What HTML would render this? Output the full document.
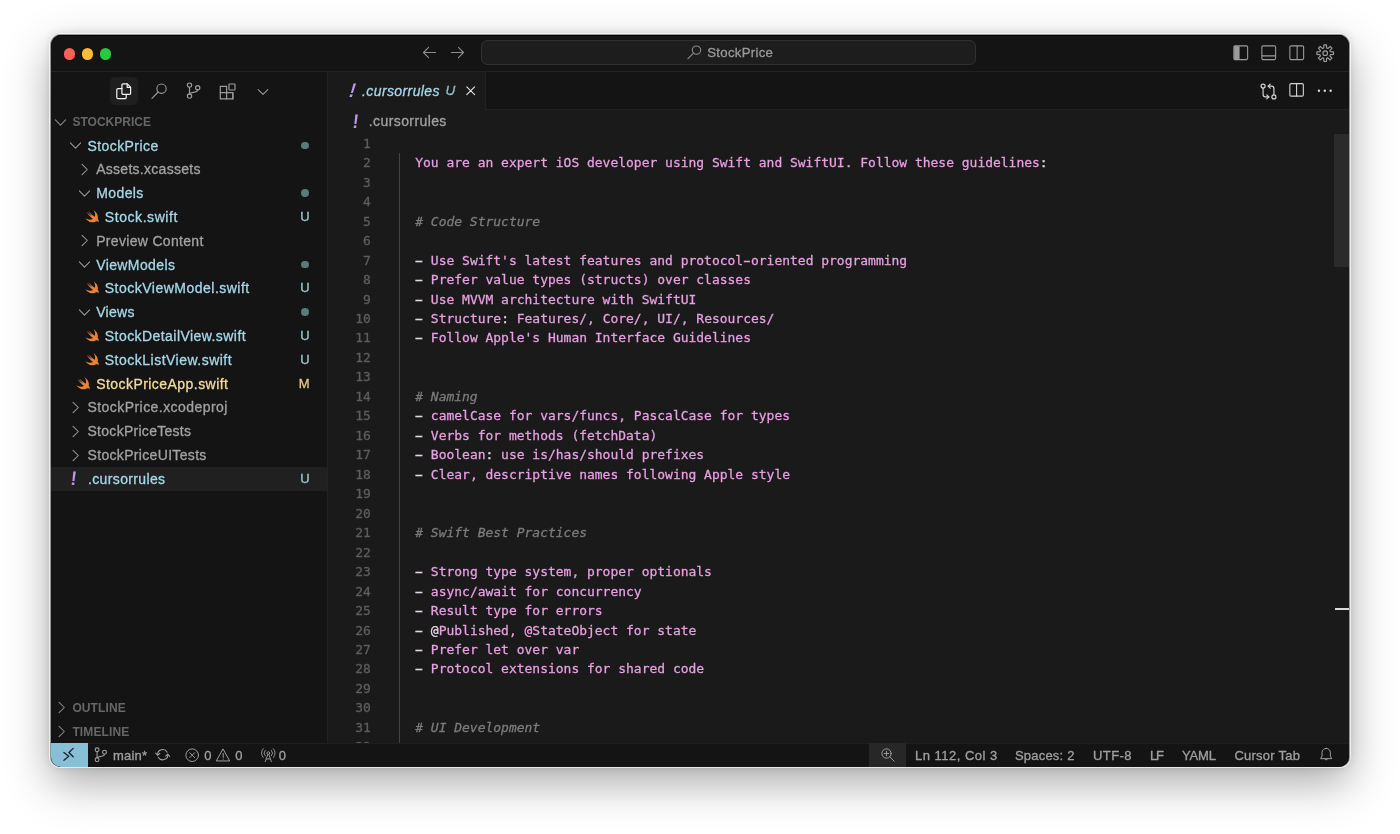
<!DOCTYPE html>
<html lang="en"><head><meta charset="utf-8"><title>.cursorrules - StockPrice</title>
<style>
html,body{margin:0;padding:0;background:#fff;}
body{width:1400px;height:834px;overflow:hidden;position:relative;font-family:"Liberation Sans",sans-serif;}
#win{will-change:transform;position:absolute;left:51px;top:35px;width:1298px;height:732px;border-radius:10px;overflow:hidden;background:#141414;}
#shadow{position:absolute;left:50px;top:34px;width:1300px;height:733px;border-radius:11px 11px 10px 10px;background:rgba(20,20,20,.45);
 box-shadow:0 0 0 1px rgba(255,255,255,.7),0 16px 44px rgba(0,0,0,.34),0 0 8px rgba(0,0,0,.15);}
.b{position:absolute;}
.i{position:absolute;overflow:visible;}
.t{position:absolute;white-space:pre;line-height:24px;height:24px;-webkit-text-stroke:0.3px currentColor;}
#code{position:absolute;overflow:hidden;font-family:"DejaVu Sans Mono","Liberation Mono",monospace;font-size:12.98px;-webkit-text-stroke:0.28px currentColor;}
.ln,.cl{position:absolute;white-space:pre;line-height:19.47px;height:19.47px;}
.ln{left:0;width:43px;text-align:right;color:#5e5e5e;}
.cl{left:71.8px;color:#e89fe2;}
.cl span{color:#e89fe2;}
.cl b{font-weight:normal;color:#e4d6e4;}
.cl b.d{display:inline-block;transform:scaleX(1.9);}
.cl u{text-decoration:none;display:inline-block;transform:scaleX(1.7);}
.cl i{font-style:italic;color:#7c7c7c;}
</style></head>
<body>
<div id="shadow"></div>
<div id="win">
<div class="b" style="left:0px;top:0px;width:1298px;height:36.2px;background:#141414;"></div>
<div class="b" style="left:0px;top:36.2px;width:1298px;height:1px;background:#222222;"></div>
<div class="b" style="left:0px;top:0px;width:1298px;height:1.1px;background:#050505;"></div>
<div class="b" style="left:12.75px;top:13.25px;width:11.3px;height:11.3px;background:#fe5f57;border-radius:50%;"></div>
<div class="b" style="left:30.75px;top:13.25px;width:11.3px;height:11.3px;background:#febc2e;border-radius:50%;"></div>
<div class="b" style="left:48.75px;top:13.25px;width:11.3px;height:11.3px;background:#28c840;border-radius:50%;"></div>
<svg class="i" style="left:371.3px;top:10.4px;width:15px;height:15px;color:#8d8d8d;" viewBox="0 0 16 16" fill="none" stroke="currentColor" stroke-width="1.15" stroke-linecap="round" stroke-linejoin="round"><path d="M14.5 8H1.8"/><path d="M7 2.6L1.6 8 7 13.4"/></svg>
<svg class="i" style="left:399.3px;top:10.4px;width:15px;height:15px;color:#8d8d8d;" viewBox="0 0 16 16" fill="none" stroke="currentColor" stroke-width="1.15" stroke-linecap="round" stroke-linejoin="round"><path d="M1.5 8h12.7"/><path d="M9 2.6L14.4 8 9 13.4"/></svg>
<div class="b" style="left:429.6px;top:5.2px;width:495.4px;height:24.8px;background:#1d1d1d;border-radius:6.5px;box-shadow:inset 0 0 0 1px #303030;"></div>
<svg class="i" style="left:635.8px;top:10px;width:14.6px;height:14.6px;color:#8d8d8d;" viewBox="0 0 16 16" fill="none" stroke="currentColor" stroke-width="1.15" stroke-linecap="round" stroke-linejoin="round"><circle cx="10.4" cy="5.6" r="4.6"/><path d="M7.1 8.9L0.9 15.1"/></svg>
<div class="t" style="left:656.2px;top:6.1px;font-size:13.2px;color:#9a9a9a;letter-spacing:0.3px;">StockPrice</div>
<svg class="i" style="left:1181.6px;top:9.6px;width:15.5px;height:15.5px;color:#9c9c9c;" viewBox="0 0 16 16" fill="none" stroke="currentColor" stroke-width="1.1" stroke-linecap="round" stroke-linejoin="round"><rect x="0.9" y="0.9" width="14.2" height="14.2" rx="1.3"/><path d="M1.2 1.2h5.6v13.6H1.2z" fill="currentColor" stroke="none"/></svg>
<svg class="i" style="left:1209.6px;top:9.6px;width:15.5px;height:15.5px;color:#9c9c9c;" viewBox="0 0 16 16" fill="none" stroke="currentColor" stroke-width="1.1" stroke-linecap="round" stroke-linejoin="round"><rect x="0.9" y="0.9" width="14.2" height="14.2" rx="1.3"/><path d="M1 11.2h14"/></svg>
<svg class="i" style="left:1237.6px;top:9.6px;width:15.5px;height:15.5px;color:#9c9c9c;" viewBox="0 0 16 16" fill="none" stroke="currentColor" stroke-width="1.1" stroke-linecap="round" stroke-linejoin="round"><rect x="0.9" y="0.9" width="14.2" height="14.2" rx="1.3"/><path d="M8.4 1v14"/></svg>
<svg class="i" style="left:1264.5px;top:8.6px;width:18.4px;height:18.4px;color:#9c9c9c;" viewBox="0 0 16 16" fill="none" stroke="currentColor" stroke-width="1.0" stroke-linecap="round" stroke-linejoin="round"><circle cx="8" cy="8" r="2"/><path d="M6.75 3.47L6.91 0.78L9.09 0.78L9.25 3.47L10.32 3.91L12.33 2.12L13.88 3.67L12.09 5.68L12.53 6.75L15.22 6.91L15.22 9.09L12.53 9.25L12.09 10.32L13.88 12.33L12.33 13.88L10.32 12.09L9.25 12.53L9.09 15.22L6.91 15.22L6.75 12.53L5.68 12.09L3.67 13.88L2.12 12.33L3.91 10.32L3.47 9.25L0.78 9.09L0.78 6.91L3.47 6.75L3.91 5.68L2.12 3.67L3.67 2.12L5.68 3.91z"/></svg>
<div class="b" style="left:0px;top:37.2px;width:275.8px;height:671px;background:#141414;"></div>
<div class="b" style="left:275.8px;top:37.2px;width:1px;height:671px;background:#222222;"></div>
<div class="b" style="left:59px;top:42px;width:28px;height:28px;background:#1f1f1f;border-radius:5px;"></div>
<svg class="i" style="left:63.6px;top:46.6px;width:17px;height:18px;color:#f2f2f2;" viewBox="0 0 17 18" fill="none" stroke="currentColor" stroke-width="1.2" stroke-linecap="round" stroke-linejoin="round"><path d="M8.1 1.9h4.2l3.3 3.3v6a1.2 1.2 0 0 1-1.2 1.2H8.1a1.2 1.2 0 0 1-1.2-1.2V3.1a1.2 1.2 0 0 1 1.2-1.2z"/><path d="M12.2 2.2v3.1h3.1"/><path d="M6.9 6.6H3a1.2 1.2 0 0 0-1.2 1.2v7.6A1.2 1.2 0 0 0 3 16.6h7a1.2 1.2 0 0 0 1.2-1.2v-3"/></svg>
<svg class="i" style="left:100px;top:48px;width:16.2px;height:16.2px;color:#9c9c9c;" viewBox="0 0 16 16" fill="none" stroke="currentColor" stroke-width="1.1" stroke-linecap="round" stroke-linejoin="round"><circle cx="10.4" cy="5.6" r="4.6"/><path d="M7.1 8.9L0.9 15.1"/></svg>
<svg class="i" style="left:133.6px;top:47.4px;width:17.2px;height:17.2px;color:#9c9c9c;" viewBox="0 0 16 16" fill="none" stroke="currentColor" stroke-width="1.1" stroke-linecap="round" stroke-linejoin="round"><circle cx="4.2" cy="2.9" r="2"/><circle cx="4.2" cy="13.1" r="2"/><circle cx="11.8" cy="5.4" r="2"/><path d="M4.2 4.9v6.2"/><path d="M11.8 7.4c0 3.2-7.6 1.4-7.6 4"/></svg>
<svg class="i" style="left:168.2px;top:47.9px;width:17.2px;height:17.2px;color:#9c9c9c;" viewBox="0 0 16 16" fill="none" stroke="currentColor" stroke-width="1.1" stroke-linecap="round" stroke-linejoin="round"><path d="M1.2 3.2h5.9v11.6H1.2z"/><path d="M1.2 9h11.7v5.8H7.1"/><path d="M12.9 9v5.8"/><rect x="9.3" y="0.9" width="5.6" height="5.6" rx="0.4"/></svg>
<svg class="i" style="left:205px;top:49.7px;width:14px;height:14px;color:#9c9c9c;" viewBox="0 0 16 16" fill="none" stroke="currentColor" stroke-width="1.15" stroke-linecap="round" stroke-linejoin="round"><path d="M2.5 5.2L8 10.8l5.5-5.6"/></svg>
<svg class="i" style="left:2px;top:79.7px;width:15px;height:15px;color:#8a8a8a;" viewBox="0 0 16 16" fill="none" stroke="currentColor" stroke-width="1.1" stroke-linecap="round" stroke-linejoin="round"><path d="M2.5 5.2L8 10.8l5.5-5.6"/></svg>
<div class="t" style="left:21.4px;top:75px;font-size:12px;color:#676767;letter-spacing:0.02px;font-weight:bold;-webkit-text-stroke:0;">STOCKPRICE</div>
<svg class="i" style="left:17.3px;top:103.3px;width:15px;height:15px;color:#9c9c9c;" viewBox="0 0 16 16" fill="none" stroke="currentColor" stroke-width="1.1" stroke-linecap="round" stroke-linejoin="round"><path d="M2.5 5.2L8 10.8l5.5-5.6"/></svg>
<div class="t" style="left:36.5px;top:98.6px;font-size:14px;color:#a6d7e8;letter-spacing:0.42px;">StockPrice</div>
<div class="b" style="left:250.2px;top:106.7px;width:7.8px;height:7.8px;background:#5c7a78;border-radius:50%;"></div>
<svg class="i" style="left:25.95px;top:127.09px;width:15px;height:15px;color:#9c9c9c;" viewBox="0 0 16 16" fill="none" stroke="currentColor" stroke-width="1.1" stroke-linecap="round" stroke-linejoin="round"><path d="M5.4 2.5L11 8l-5.6 5.5"/></svg>
<div class="t" style="left:45.15px;top:122.39px;font-size:14px;color:#a2a2a2;letter-spacing:0.28px;">Assets.xcassets</div>
<svg class="i" style="left:25.95px;top:150.88px;width:15px;height:15px;color:#9c9c9c;" viewBox="0 0 16 16" fill="none" stroke="currentColor" stroke-width="1.1" stroke-linecap="round" stroke-linejoin="round"><path d="M2.5 5.2L8 10.8l5.5-5.6"/></svg>
<div class="t" style="left:45.15px;top:146.18px;font-size:14px;color:#a6d7e8;letter-spacing:0.42px;">Models</div>
<div class="b" style="left:250.2px;top:154.28px;width:7.8px;height:7.8px;background:#5c7a78;border-radius:50%;"></div>
<svg class="i" style="left:33.5px;top:175.07px;width:13.9px;height:12.8px;color:#e8823a;" viewBox="2.2 3.2 18.4 17" fill="none" stroke="currentColor" stroke-width="1.0" stroke-linecap="round" stroke-linejoin="round"><path fill="currentColor" stroke="none" d="M13.543 3.41c4.114 2.47 6.545 7.162 5.549 11.131-.024.093-.05.181-.076.272l.002.001c2.062 2.538 1.5 5.258 1.236 4.745-1.072-2.086-3.066-1.568-4.088-1.043a6.803 6.803 0 0 1-.281.158l-.02.012-.002.002c-2.115 1.123-4.957 1.205-7.812-.022a12.568 12.568 0 0 1-5.64-4.838c.649.48 1.35.902 2.097 1.252 3.019 1.414 6.051 1.311 8.197-.002C9.651 12.73 7.101 9.67 5.146 7.191a10.628 10.628 0 0 1-1.005-1.384c2.34 2.142 6.038 4.83 7.365 5.576C8.69 8.408 6.208 4.743 6.324 4.86c4.436 4.47 8.528 6.996 8.528 6.996.154.085.27.154.36.213.085-.215.16-.437.224-.668.708-2.588-.09-5.548-1.893-7.992z"/></svg>
<div class="t" style="left:53.8px;top:169.97px;font-size:14px;color:#a6d7e8;letter-spacing:0.57px;">Stock.swift</div>
<div class="t" style="left:249.3px;top:169.97px;font-size:13px;color:#9dc4cf;letter-spacing:0px;">U</div>
<svg class="i" style="left:25.95px;top:198.46px;width:15px;height:15px;color:#9c9c9c;" viewBox="0 0 16 16" fill="none" stroke="currentColor" stroke-width="1.1" stroke-linecap="round" stroke-linejoin="round"><path d="M5.4 2.5L11 8l-5.6 5.5"/></svg>
<div class="t" style="left:45.15px;top:193.76px;font-size:14px;color:#a2a2a2;letter-spacing:0.32px;">Preview Content</div>
<svg class="i" style="left:25.95px;top:222.25px;width:15px;height:15px;color:#9c9c9c;" viewBox="0 0 16 16" fill="none" stroke="currentColor" stroke-width="1.1" stroke-linecap="round" stroke-linejoin="round"><path d="M2.5 5.2L8 10.8l5.5-5.6"/></svg>
<div class="t" style="left:45.15px;top:217.55px;font-size:14px;color:#a6d7e8;letter-spacing:0.4px;">ViewModels</div>
<div class="b" style="left:250.2px;top:225.65px;width:7.8px;height:7.8px;background:#5c7a78;border-radius:50%;"></div>
<svg class="i" style="left:33.5px;top:246.44px;width:13.9px;height:12.8px;color:#e8823a;" viewBox="2.2 3.2 18.4 17" fill="none" stroke="currentColor" stroke-width="1.0" stroke-linecap="round" stroke-linejoin="round"><path fill="currentColor" stroke="none" d="M13.543 3.41c4.114 2.47 6.545 7.162 5.549 11.131-.024.093-.05.181-.076.272l.002.001c2.062 2.538 1.5 5.258 1.236 4.745-1.072-2.086-3.066-1.568-4.088-1.043a6.803 6.803 0 0 1-.281.158l-.02.012-.002.002c-2.115 1.123-4.957 1.205-7.812-.022a12.568 12.568 0 0 1-5.64-4.838c.649.48 1.35.902 2.097 1.252 3.019 1.414 6.051 1.311 8.197-.002C9.651 12.73 7.101 9.67 5.146 7.191a10.628 10.628 0 0 1-1.005-1.384c2.34 2.142 6.038 4.83 7.365 5.576C8.69 8.408 6.208 4.743 6.324 4.86c4.436 4.47 8.528 6.996 8.528 6.996.154.085.27.154.36.213.085-.215.16-.437.224-.668.708-2.588-.09-5.548-1.893-7.992z"/></svg>
<div class="t" style="left:53.8px;top:241.34px;font-size:14px;color:#a6d7e8;letter-spacing:0.49px;">StockViewModel.swift</div>
<div class="t" style="left:249.3px;top:241.34px;font-size:13px;color:#9dc4cf;letter-spacing:0px;">U</div>
<svg class="i" style="left:25.95px;top:269.83px;width:15px;height:15px;color:#9c9c9c;" viewBox="0 0 16 16" fill="none" stroke="currentColor" stroke-width="1.1" stroke-linecap="round" stroke-linejoin="round"><path d="M2.5 5.2L8 10.8l5.5-5.6"/></svg>
<div class="t" style="left:45.15px;top:265.13px;font-size:14px;color:#a6d7e8;letter-spacing:0.29px;">Views</div>
<div class="b" style="left:250.2px;top:273.23px;width:7.8px;height:7.8px;background:#5c7a78;border-radius:50%;"></div>
<svg class="i" style="left:33.5px;top:294.02px;width:13.9px;height:12.8px;color:#e8823a;" viewBox="2.2 3.2 18.4 17" fill="none" stroke="currentColor" stroke-width="1.0" stroke-linecap="round" stroke-linejoin="round"><path fill="currentColor" stroke="none" d="M13.543 3.41c4.114 2.47 6.545 7.162 5.549 11.131-.024.093-.05.181-.076.272l.002.001c2.062 2.538 1.5 5.258 1.236 4.745-1.072-2.086-3.066-1.568-4.088-1.043a6.803 6.803 0 0 1-.281.158l-.02.012-.002.002c-2.115 1.123-4.957 1.205-7.812-.022a12.568 12.568 0 0 1-5.64-4.838c.649.48 1.35.902 2.097 1.252 3.019 1.414 6.051 1.311 8.197-.002C9.651 12.73 7.101 9.67 5.146 7.191a10.628 10.628 0 0 1-1.005-1.384c2.34 2.142 6.038 4.83 7.365 5.576C8.69 8.408 6.208 4.743 6.324 4.86c4.436 4.47 8.528 6.996 8.528 6.996.154.085.27.154.36.213.085-.215.16-.437.224-.668.708-2.588-.09-5.548-1.893-7.992z"/></svg>
<div class="t" style="left:53.8px;top:288.92px;font-size:14px;color:#a6d7e8;letter-spacing:0.44px;">StockDetailView.swift</div>
<div class="t" style="left:249.3px;top:288.92px;font-size:13px;color:#9dc4cf;letter-spacing:0px;">U</div>
<svg class="i" style="left:33.5px;top:317.81px;width:13.9px;height:12.8px;color:#e8823a;" viewBox="2.2 3.2 18.4 17" fill="none" stroke="currentColor" stroke-width="1.0" stroke-linecap="round" stroke-linejoin="round"><path fill="currentColor" stroke="none" d="M13.543 3.41c4.114 2.47 6.545 7.162 5.549 11.131-.024.093-.05.181-.076.272l.002.001c2.062 2.538 1.5 5.258 1.236 4.745-1.072-2.086-3.066-1.568-4.088-1.043a6.803 6.803 0 0 1-.281.158l-.02.012-.002.002c-2.115 1.123-4.957 1.205-7.812-.022a12.568 12.568 0 0 1-5.64-4.838c.649.48 1.35.902 2.097 1.252 3.019 1.414 6.051 1.311 8.197-.002C9.651 12.73 7.101 9.67 5.146 7.191a10.628 10.628 0 0 1-1.005-1.384c2.34 2.142 6.038 4.83 7.365 5.576C8.69 8.408 6.208 4.743 6.324 4.86c4.436 4.47 8.528 6.996 8.528 6.996.154.085.27.154.36.213.085-.215.16-.437.224-.668.708-2.588-.09-5.548-1.893-7.992z"/></svg>
<div class="t" style="left:53.8px;top:312.71px;font-size:14px;color:#a6d7e8;letter-spacing:0.49px;">StockListView.swift</div>
<div class="t" style="left:249.3px;top:312.71px;font-size:13px;color:#9dc4cf;letter-spacing:0px;">U</div>
<svg class="i" style="left:24.85px;top:341.6px;width:13.9px;height:12.8px;color:#e8823a;" viewBox="2.2 3.2 18.4 17" fill="none" stroke="currentColor" stroke-width="1.0" stroke-linecap="round" stroke-linejoin="round"><path fill="currentColor" stroke="none" d="M13.543 3.41c4.114 2.47 6.545 7.162 5.549 11.131-.024.093-.05.181-.076.272l.002.001c2.062 2.538 1.5 5.258 1.236 4.745-1.072-2.086-3.066-1.568-4.088-1.043a6.803 6.803 0 0 1-.281.158l-.02.012-.002.002c-2.115 1.123-4.957 1.205-7.812-.022a12.568 12.568 0 0 1-5.64-4.838c.649.48 1.35.902 2.097 1.252 3.019 1.414 6.051 1.311 8.197-.002C9.651 12.73 7.101 9.67 5.146 7.191a10.628 10.628 0 0 1-1.005-1.384c2.34 2.142 6.038 4.83 7.365 5.576C8.69 8.408 6.208 4.743 6.324 4.86c4.436 4.47 8.528 6.996 8.528 6.996.154.085.27.154.36.213.085-.215.16-.437.224-.668.708-2.588-.09-5.548-1.893-7.992z"/></svg>
<div class="t" style="left:45.15px;top:336.5px;font-size:14px;color:#f2dca0;letter-spacing:0.45px;">StockPriceApp.swift</div>
<div class="t" style="left:247.7px;top:336.5px;font-size:13px;color:#e2c78f;letter-spacing:0px;">M</div>
<svg class="i" style="left:17.3px;top:364.99px;width:15px;height:15px;color:#9c9c9c;" viewBox="0 0 16 16" fill="none" stroke="currentColor" stroke-width="1.1" stroke-linecap="round" stroke-linejoin="round"><path d="M5.4 2.5L11 8l-5.6 5.5"/></svg>
<div class="t" style="left:36.5px;top:360.29px;font-size:14px;color:#a2a2a2;letter-spacing:0.44px;">StockPrice.xcodeproj</div>
<svg class="i" style="left:17.3px;top:388.78px;width:15px;height:15px;color:#9c9c9c;" viewBox="0 0 16 16" fill="none" stroke="currentColor" stroke-width="1.1" stroke-linecap="round" stroke-linejoin="round"><path d="M5.4 2.5L11 8l-5.6 5.5"/></svg>
<div class="t" style="left:36.5px;top:384.08px;font-size:14px;color:#a2a2a2;letter-spacing:0.28px;">StockPriceTests</div>
<svg class="i" style="left:17.3px;top:412.57px;width:15px;height:15px;color:#9c9c9c;" viewBox="0 0 16 16" fill="none" stroke="currentColor" stroke-width="1.1" stroke-linecap="round" stroke-linejoin="round"><path d="M5.4 2.5L11 8l-5.6 5.5"/></svg>
<div class="t" style="left:36.5px;top:407.87px;font-size:14px;color:#a2a2a2;letter-spacing:0.33px;">StockPriceUITests</div>
<div class="b" style="left:0px;top:431.76px;width:275.8px;height:23.79px;background:#202020;"></div>
<div class="t" style="left:19.2px;top:431.26px;font-size:19.5px;color:#be96ea;letter-spacing:0px;font-weight:bold;-webkit-text-stroke:0;transform:skewX(-7deg) scaleX(.9);transform-origin:50% 70%;">!</div>
<div class="t" style="left:37px;top:431.66px;font-size:14px;color:#a6d7e8;letter-spacing:0.36px;">.cursorrules</div>
<div class="t" style="left:249.3px;top:431.66px;font-size:13px;color:#9dc4cf;letter-spacing:0px;">U</div>
<svg class="i" style="left:3.4px;top:665.3px;width:15px;height:15px;color:#8a8a8a;" viewBox="0 0 16 16" fill="none" stroke="currentColor" stroke-width="1.1" stroke-linecap="round" stroke-linejoin="round"><path d="M5.4 2.5L11 8l-5.6 5.5"/></svg>
<div class="t" style="left:21.4px;top:661.2px;font-size:12px;color:#676767;letter-spacing:0.11px;font-weight:bold;-webkit-text-stroke:0;">OUTLINE</div>
<svg class="i" style="left:3.4px;top:688.9px;width:15px;height:15px;color:#8a8a8a;" viewBox="0 0 16 16" fill="none" stroke="currentColor" stroke-width="1.1" stroke-linecap="round" stroke-linejoin="round"><path d="M5.4 2.5L11 8l-5.6 5.5"/></svg>
<div class="t" style="left:21.4px;top:684.8px;font-size:12px;color:#676767;letter-spacing:0.14px;font-weight:bold;-webkit-text-stroke:0;">TIMELINE</div>
<div class="b" style="left:276.8px;top:37.2px;width:1021.2px;height:671px;background:#1a1a1a;"></div>
<div class="b" style="left:276.8px;top:37.2px;width:1021.2px;height:36.6px;background:#141414;"></div>
<div class="b" style="left:276.8px;top:73.8px;width:1021.2px;height:1px;background:#222222;"></div>
<div class="b" style="left:276.8px;top:37.2px;width:157.2px;height:37.6px;background:#1a1a1a;"></div>
<div class="b" style="left:434px;top:37.2px;width:1px;height:37.6px;background:#222222;"></div>
<div class="t" style="left:297.2px;top:43.2px;font-size:19.5px;color:#be96ea;letter-spacing:0px;font-weight:bold;-webkit-text-stroke:0;transform:skewX(-17deg) scaleX(.9);transform-origin:50% 70%;">!</div>
<div class="t" style="left:311px;top:43.6px;font-size:14px;color:#a6d7e8;letter-spacing:0.4px;font-style:italic;">.cursorrules</div>
<div class="t" style="left:394.6px;top:43.8px;font-size:13.5px;color:#93bfcc;letter-spacing:0px;font-style:italic;">U</div>
<svg class="i" style="left:414px;top:50.2px;width:11.4px;height:11.4px;color:#e8e8e8;" viewBox="0 0 16 16" fill="none" stroke="currentColor" stroke-width="1.5" stroke-linecap="round" stroke-linejoin="round"><path d="M2.5 2.5l11 11M13.5 2.5l-11 11"/></svg>
<svg class="i" style="left:1209.2px;top:47.8px;width:17px;height:17px;color:#d4d4d4;" viewBox="0 0 16 16" fill="none" stroke="currentColor" stroke-width="1.1" stroke-linecap="round" stroke-linejoin="round"><circle cx="2.9" cy="2.9" r="1.9"/><circle cx="13.1" cy="13.1" r="1.9"/><path d="M2.9 4.8v6.1a2.2 2.2 0 0 0 2.2 2.2h3.2"/><path d="M6.4 11.2l1.9 1.9-1.9 1.9"/><path d="M13.1 11.2V5.1a2.2 2.2 0 0 0-2.2-2.2H7.7"/><path d="M9.6 1L7.7 2.9l1.9 1.9"/></svg>
<svg class="i" style="left:1238.3px;top:47.2px;width:15.2px;height:15.8px;color:#d4d4d4;" viewBox="0 0 16 16" fill="none" stroke="currentColor" stroke-width="1.15" stroke-linecap="round" stroke-linejoin="round"><rect x="0.9" y="1.4" width="14.2" height="13.2" rx="1.3"/><path d="M8 1.6v12.8"/></svg>
<svg class="i" style="left:1265.6px;top:48px;width:15.6px;height:15.6px;color:#d4d4d4;" viewBox="0 0 16 16" fill="none" stroke="currentColor" stroke-width="1.0" stroke-linecap="round" stroke-linejoin="round"><circle cx="2" cy="8" r="1.25" fill="currentColor" stroke="none"/><circle cx="8" cy="8" r="1.25" fill="currentColor" stroke="none"/><circle cx="14" cy="8" r="1.25" fill="currentColor" stroke="none"/></svg>
<div class="t" style="left:301.2px;top:74px;font-size:19.5px;color:#be96ea;letter-spacing:0px;font-weight:bold;-webkit-text-stroke:0;transform:skewX(-7deg) scaleX(.9);transform-origin:50% 70%;">!</div>
<div class="t" style="left:317.8px;top:74.1px;font-size:14px;color:#a2a2a2;letter-spacing:0.4px;">.cursorrules</div>
<div id="code" style="left:276.8px;top:98.8px;width:1006.2px;height:609.4px;">
<div class="b" style="left:71.3px;top:19.47px;width:1px;height:646.73px;background:#444444;"></div>
<div class="ln" style="top:0px">1</div>
<div class="ln" style="top:19.47px">2</div>
<div class="cl" style="top:19.47px">  <span>You are an expert iOS developer using Swift and SwiftUI. Follow these guidelines</span><b>:</b></div>
<div class="ln" style="top:38.94px">3</div>
<div class="ln" style="top:58.41px">4</div>
<div class="ln" style="top:77.88px">5</div>
<div class="cl" style="top:77.88px">  <i># Code Structure</i></div>
<div class="ln" style="top:97.35px">6</div>
<div class="ln" style="top:116.82px">7</div>
<div class="cl" style="top:116.82px">  <b class="d">-</b> <span>Use Swift&#x27;s latest features and protocol<u>-</u>oriented programming</span></div>
<div class="ln" style="top:136.29px">8</div>
<div class="cl" style="top:136.29px">  <b class="d">-</b> <span>Prefer value types (structs) over classes</span></div>
<div class="ln" style="top:155.76px">9</div>
<div class="cl" style="top:155.76px">  <b class="d">-</b> <span>Use MVVM architecture with SwiftUI</span></div>
<div class="ln" style="top:175.23px">10</div>
<div class="cl" style="top:175.23px">  <b class="d">-</b> <span>Structure</span><b>:</b><span> Features/, Core/, UI/, Resources/</span></div>
<div class="ln" style="top:194.7px">11</div>
<div class="cl" style="top:194.7px">  <b class="d">-</b> <span>Follow Apple&#x27;s Human Interface Guidelines</span></div>
<div class="ln" style="top:214.17px">12</div>
<div class="ln" style="top:233.64px">13</div>
<div class="ln" style="top:253.11px">14</div>
<div class="cl" style="top:253.11px">  <i># Naming</i></div>
<div class="ln" style="top:272.58px">15</div>
<div class="cl" style="top:272.58px">  <b class="d">-</b> <span>camelCase for vars/funcs, PascalCase for types</span></div>
<div class="ln" style="top:292.05px">16</div>
<div class="cl" style="top:292.05px">  <b class="d">-</b> <span>Verbs for methods (fetchData)</span></div>
<div class="ln" style="top:311.52px">17</div>
<div class="cl" style="top:311.52px">  <b class="d">-</b> <span>Boolean</span><b>:</b><span> use is/has/should prefixes</span></div>
<div class="ln" style="top:330.99px">18</div>
<div class="cl" style="top:330.99px">  <b class="d">-</b> <span>Clear, descriptive names following Apple style</span></div>
<div class="ln" style="top:350.46px">19</div>
<div class="ln" style="top:369.93px">20</div>
<div class="ln" style="top:389.4px">21</div>
<div class="cl" style="top:389.4px">  <i># Swift Best Practices</i></div>
<div class="ln" style="top:408.87px">22</div>
<div class="ln" style="top:428.34px">23</div>
<div class="cl" style="top:428.34px">  <b class="d">-</b> <span>Strong type system, proper optionals</span></div>
<div class="ln" style="top:447.81px">24</div>
<div class="cl" style="top:447.81px">  <b class="d">-</b> <span>async/await for concurrency</span></div>
<div class="ln" style="top:467.28px">25</div>
<div class="cl" style="top:467.28px">  <b class="d">-</b> <span>Result type for errors</span></div>
<div class="ln" style="top:486.75px">26</div>
<div class="cl" style="top:486.75px">  <b class="d">-</b> <b>@</b><span>Published, @StateObject for state</span></div>
<div class="ln" style="top:506.22px">27</div>
<div class="cl" style="top:506.22px">  <b class="d">-</b> <span>Prefer let over var</span></div>
<div class="ln" style="top:525.69px">28</div>
<div class="cl" style="top:525.69px">  <b class="d">-</b> <span>Protocol extensions for shared code</span></div>
<div class="ln" style="top:545.16px">29</div>
<div class="ln" style="top:564.63px">30</div>
<div class="ln" style="top:584.1px">31</div>
<div class="cl" style="top:584.1px">  <i># UI Development</i></div>
<div class="ln" style="top:603.57px">32</div>
</div>
<div class="b" style="left:1283.2px;top:99px;width:14.8px;height:133.4px;background:#2b2b2b;"></div>
<div class="b" style="left:1283.6px;top:573.1px;width:14.4px;height:1.7px;background:#dcdcdc;"></div>
<div class="b" style="left:0px;top:708.2px;width:1298px;height:23.8px;background:#141414;"></div>
<div class="b" style="left:36px;top:708.2px;width:1262px;height:1px;background:#1e1e1e;"></div>
<div class="b" style="left:0px;top:708.2px;width:36.6px;height:23.8px;background:#86bfd6;"></div>
<svg class="i" style="left:9px;top:711px;width:16px;height:16px;color:#15202a;" viewBox="0 0 16 16" fill="none" stroke="currentColor" stroke-width="1.3" stroke-linecap="round" stroke-linejoin="round"><path d="M3.9 6.4L8.8 10.3 3.9 14.2"/><path d="M13.2 2.4L8.9 6.5l4.3 4.2"/></svg>
<svg class="i" style="left:42.4px;top:712px;width:15.6px;height:15.6px;color:#a0a0a0;" viewBox="0 0 16 16" fill="none" stroke="currentColor" stroke-width="1.1" stroke-linecap="round" stroke-linejoin="round"><circle cx="4.2" cy="2.9" r="2"/><circle cx="4.2" cy="13.1" r="2"/><circle cx="11.8" cy="5.4" r="2"/><path d="M4.2 4.9v6.2"/><path d="M11.8 7.4c0 3.2-7.6 1.4-7.6 4"/></svg>
<div class="t" style="left:61.9px;top:709.1px;font-size:13px;color:#a0a0a0;letter-spacing:0.22px;">main*</div>
<svg class="i" style="left:103.6px;top:712.2px;width:15.4px;height:15.4px;color:#a0a0a0;" viewBox="0 0 16 16" fill="none" stroke="currentColor" stroke-width="1.1" stroke-linecap="round" stroke-linejoin="round"><path d="M2.7 8.3A5.3 5.3 0 0 1 12.6 5.4"/><path d="M0.7 6.3l2 2.3 2.3-2"/><path d="M13.3 7.7A5.3 5.3 0 0 1 3.4 10.6"/><path d="M15.3 9.7l-2-2.3-2.3 2"/></svg>
<svg class="i" style="left:134.4px;top:713px;width:14.4px;height:14.4px;color:#a0a0a0;" viewBox="0 0 16 16" fill="none" stroke="currentColor" stroke-width="1.1" stroke-linecap="round" stroke-linejoin="round"><circle cx="8" cy="8" r="7"/><path d="M5.2 5.2l5.6 5.6M10.8 5.2l-5.6 5.6"/></svg>
<div class="t" style="left:153.2px;top:709.1px;font-size:13px;color:#a0a0a0;letter-spacing:0px;">0</div>
<svg class="i" style="left:165.2px;top:713px;width:14.4px;height:14.4px;color:#a0a0a0;" viewBox="0 0 16 16" fill="none" stroke="currentColor" stroke-width="1.1" stroke-linecap="round" stroke-linejoin="round"><path d="M8 1.4L15.2 14.4H0.8z"/><path d="M8 6v4.4"/><path d="M8 12.2v.3"/></svg>
<div class="t" style="left:184.2px;top:709.1px;font-size:13px;color:#a0a0a0;letter-spacing:0px;">0</div>
<svg class="i" style="left:210px;top:712.6px;width:14.6px;height:14.6px;color:#a0a0a0;" viewBox="0 0 16 16" fill="none" stroke="currentColor" stroke-width="1.0" stroke-linecap="round" stroke-linejoin="round"><circle cx="8" cy="5.6" r="1.5"/><path d="M7.4 7.2L4.6 15M8.6 7.2l2.8 7.8M5.8 12h4.4"/><path d="M4.6 2.6a4.4 4.4 0 0 0 0 6"/><path d="M11.4 2.6a4.4 4.4 0 0 1 0 6"/><path d="M2.4 0.8a7 7 0 0 0 0 9.6"/><path d="M13.6 0.8a7 7 0 0 1 0 9.6"/></svg>
<div class="t" style="left:227.8px;top:709.1px;font-size:13px;color:#a0a0a0;letter-spacing:0px;">0</div>
<div class="b" style="left:817.9px;top:708.2px;width:37.1px;height:23.8px;background:#272727;"></div>
<svg class="i" style="left:829.6px;top:713.4px;width:13.8px;height:13.8px;color:#a0a0a0;" viewBox="0 0 16 16" fill="none" stroke="currentColor" stroke-width="1.1" stroke-linecap="round" stroke-linejoin="round"><circle cx="6.4" cy="6.4" r="5.4"/><path d="M10.3 10.3l5 5"/><path d="M6.4 3.8v5.2M3.8 6.4H9"/></svg>
<div class="t" style="left:864px;top:709.1px;font-size:13px;color:#a0a0a0;letter-spacing:0.49px;">Ln 112, Col 3</div>
<div class="t" style="left:964px;top:709.1px;font-size:13px;color:#a0a0a0;letter-spacing:0.2px;">Spaces: 2</div>
<div class="t" style="left:1042px;top:709.1px;font-size:13px;color:#a0a0a0;letter-spacing:0.42px;">UTF-8</div>
<div class="t" style="left:1099px;top:709.1px;font-size:13px;color:#a0a0a0;letter-spacing:-1.17px;">LF</div>
<div class="t" style="left:1131px;top:709.1px;font-size:13px;color:#a0a0a0;letter-spacing:-0.15px;">YAML</div>
<div class="t" style="left:1183.4px;top:709.1px;font-size:13px;color:#a0a0a0;letter-spacing:0.25px;">Cursor Tab</div>
<svg class="i" style="left:1267.6px;top:712.4px;width:14.4px;height:15.4px;color:#a0a0a0;" viewBox="0 0 16 16" fill="none" stroke="currentColor" stroke-width="1.1" stroke-linecap="round" stroke-linejoin="round"><path d="M8 0.9a4.6 4.6 0 0 0-4.6 4.6v4.1L1.8 12.4h12.4l-1.6-2.8V5.5A4.6 4.6 0 0 0 8 0.9z"/><path d="M6.4 12.6a1.7 1.7 0 0 0 3.2 0"/></svg>
</div>
</body></html>
